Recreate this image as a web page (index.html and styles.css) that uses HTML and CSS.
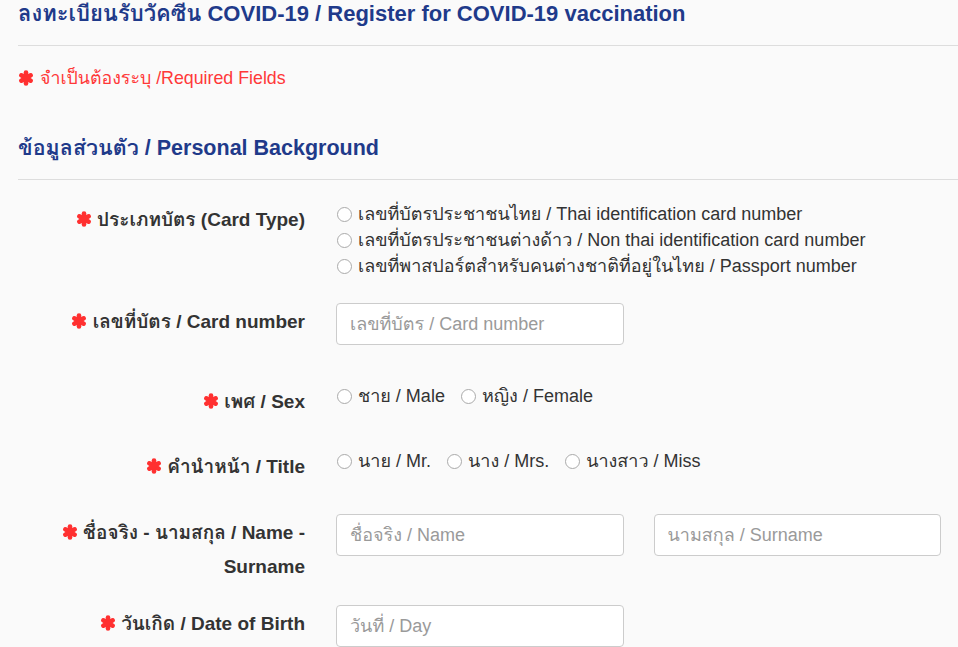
FILE: index.html
```html
<!DOCTYPE html>
<html lang="th">
<head>
<meta charset="utf-8">
<title>ลงทะเบียนรับวัคซีน COVID-19</title>
<link rel="stylesheet" href="styles.css">
</head>
<body>
<div class="page">
  <header class="page-header">
    <h1 class="page-title">ลงทะเบียนรับวัคซีน COVID-19 / Register for COVID-19 vaccination</h1>
  </header>

  <p class="required-note"><svg class="star" viewBox="0 0 16 16" aria-hidden="true"><g stroke="currentColor" stroke-width="4.6" stroke-linecap="round"><line x1="8" y1="2.6" x2="8" y2="13.4"/><line x1="3.3" y1="5.3" x2="12.7" y2="10.7"/><line x1="3.3" y1="10.7" x2="12.7" y2="5.3"/></g></svg> จำเป็นต้องระบุ /Required Fields</p>

  <h2 class="section-title">ข้อมูลส่วนตัว / Personal Background</h2>

  <form class="form">
    <div class="row">
      <label class="row-label"><svg class="star" viewBox="0 0 16 16" aria-hidden="true"><g stroke="currentColor" stroke-width="4.6" stroke-linecap="round"><line x1="8" y1="2.6" x2="8" y2="13.4"/><line x1="3.3" y1="5.3" x2="12.7" y2="10.7"/><line x1="3.3" y1="10.7" x2="12.7" y2="5.3"/></g></svg> ประเภทบัตร (Card Type)</label>
      <div class="radio-stack">
        <label class="radio"><input type="radio" name="card"> เลขที่บัตรประชาชนไทย / Thai identification card number</label>
        <label class="radio"><input type="radio" name="card"> เลขที่บัตรประชาชนต่างด้าว / Non thai identification card number</label>
        <label class="radio"><input type="radio" name="card"> เลขที่พาสปอร์ตสำหรับคนต่างชาติที่อยู่ในไทย / Passport number</label>
      </div>
    </div>

    <div class="row">
      <label class="row-label"><svg class="star" viewBox="0 0 16 16" aria-hidden="true"><g stroke="currentColor" stroke-width="4.6" stroke-linecap="round"><line x1="8" y1="2.6" x2="8" y2="13.4"/><line x1="3.3" y1="5.3" x2="12.7" y2="10.7"/><line x1="3.3" y1="10.7" x2="12.7" y2="5.3"/></g></svg> เลขที่บัตร / Card number</label>
      <div class="fields">
        <input class="text-input" type="text" placeholder="เลขที่บัตร / Card number">
      </div>
    </div>

    <div class="row row-spaced">
      <label class="row-label"><svg class="star" viewBox="0 0 16 16" aria-hidden="true"><g stroke="currentColor" stroke-width="4.6" stroke-linecap="round"><line x1="8" y1="2.6" x2="8" y2="13.4"/><line x1="3.3" y1="5.3" x2="12.7" y2="10.7"/><line x1="3.3" y1="10.7" x2="12.7" y2="5.3"/></g></svg> เพศ / Sex</label>
      <div class="radio-inline-group">
        <label class="radio"><input type="radio" name="sex"> ชาย / Male</label>
        <label class="radio"><input type="radio" name="sex"> หญิง / Female</label>
      </div>
    </div>

    <div class="row row-before-name">
      <label class="row-label"><svg class="star" viewBox="0 0 16 16" aria-hidden="true"><g stroke="currentColor" stroke-width="4.6" stroke-linecap="round"><line x1="8" y1="2.6" x2="8" y2="13.4"/><line x1="3.3" y1="5.3" x2="12.7" y2="10.7"/><line x1="3.3" y1="10.7" x2="12.7" y2="5.3"/></g></svg> คำนำหน้า / Title</label>
      <div class="radio-inline-group">
        <label class="radio"><input type="radio" name="title"> นาย / Mr.</label>
        <label class="radio"><input type="radio" name="title"> นาง / Mrs.</label>
        <label class="radio"><input type="radio" name="title"> นางสาว / Miss</label>
      </div>
    </div>

    <div class="row row-tight">
      <label class="row-label"><svg class="star" viewBox="0 0 16 16" aria-hidden="true"><g stroke="currentColor" stroke-width="4.6" stroke-linecap="round"><line x1="8" y1="2.6" x2="8" y2="13.4"/><line x1="3.3" y1="5.3" x2="12.7" y2="10.7"/><line x1="3.3" y1="10.7" x2="12.7" y2="5.3"/></g></svg> ชื่อจริง - นามสกุล / Name - Surname</label>
      <div class="fields fields-two">
        <input class="text-input" type="text" placeholder="ชื่อจริง / Name">
        <input class="text-input" type="text" placeholder="นามสกุล / Surname">
      </div>
    </div>

    <div class="row">
      <label class="row-label"><svg class="star" viewBox="0 0 16 16" aria-hidden="true"><g stroke="currentColor" stroke-width="4.6" stroke-linecap="round"><line x1="8" y1="2.6" x2="8" y2="13.4"/><line x1="3.3" y1="5.3" x2="12.7" y2="10.7"/><line x1="3.3" y1="10.7" x2="12.7" y2="5.3"/></g></svg> วันเกิด / Date of Birth</label>
      <div class="fields fields-two">
        <input class="text-input" type="text" placeholder="วันที่ / Day">
      </div>
    </div>
  </form>
</div>
</body>
</html>
```

FILE: styles.css
```css
html, body {
  margin: 0;
  padding: 0;
  background: #fafafa;
}

body {
  font-family: "Liberation Sans", "Loma", "Waree", "Garuda", "Noto Sans Thai Looped", "Noto Sans Thai", "Noto Sans", sans-serif;
  color: #333333;
  font-size: 18px;
}

.page {
  padding-left: 18px;
}

.page-header {
  padding-top: 1px;
  padding-bottom: 18px;
  border-bottom: 1px solid #dddddd;
}

.page-title {
  margin: 0;
  font-size: 22px;
  line-height: 26px;
  font-weight: bold;
  color: #1f3a8a;
}

.required-note {
  margin: 20px 0 0;
  line-height: 24px;
  font-size: 17.8px;
  color: #ff3838;
  display: flex;
  align-items: center;
  gap: 6px;
}

.star {
  width: 16px;
  height: 16px;
  color: #ff3030;
  flex: none;
}

.section-title {
  margin: 44px 0 0;
  padding-bottom: 17px;
  border-bottom: 1px solid #dddddd;
  font-size: 21.5px;
  line-height: 28px;
  font-weight: bold;
  color: #1f3a8a;
}

.form {
  display: flex;
  flex-direction: column;
  padding: 21px 17px 0 0;
}

.row {
  display: grid;
  grid-template-columns: 287px 1fr;
  column-gap: 31px;
  min-height: 42px;
  margin-bottom: 24px;
  align-items: start;
}

.row-spaced {
  margin-top: 14px;
  margin-bottom: 23px;
}

.row-before-name {
  margin-bottom: 24px;
}

.row-tight {
  margin-bottom: 21px;
}

.row-label {
  padding-top: 2px;
  line-height: 34px;
  font-size: 19px;
  font-weight: bold;
  text-align: right;
  color: #333333;
}

.row-label .star {
  vertical-align: -1px;
}

.radio-stack {
  display: flex;
  flex-direction: column;
}

.radio-inline-group {
  display: flex;
  gap: 15px;
}

.radio {
  display: flex;
  align-items: center;
  line-height: 26px;
  gap: 6px;
}

.radio input {
  appearance: none;
  -webkit-appearance: none;
  width: 15px;
  height: 15px;
  margin: 0 0 0 1px;
  border: 1px solid #aaaaaa;
  border-radius: 50%;
  background: #ffffff;
  flex: none;
}

.fields {
  display: grid;
  grid-template-columns: 1fr 1fr;
  column-gap: 30px;
}

.text-input {
  box-sizing: border-box;
  height: 42px;
  width: 100%;
  padding: 0 13px;
  border: 1px solid #cccccc;
  border-radius: 4px;
  background: #ffffff;
  font: inherit;
  font-size: 18px;
  color: #333333;
}

.text-input::placeholder {
  color: #9a9a9a;
}
```
